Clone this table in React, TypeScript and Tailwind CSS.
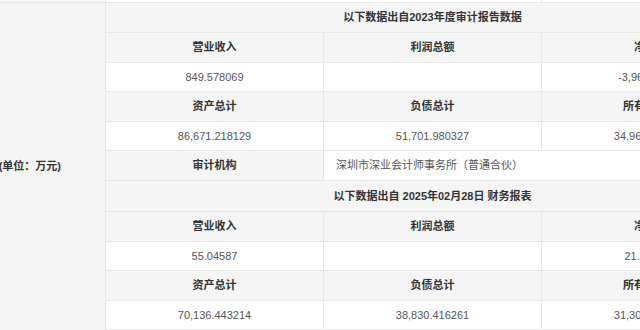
import React from "react";

interface FinRow {
  labels: string[];
  values: string[];
}

interface ReportBlock {
  title: string;
  titleH: string;
  rows: FinRow[];
}

const blocks: ReportBlock[] = [
  {
    title: "以下数据出自2023年度审计报告数据",
    titleH: "h-[30px]",
    rows: [
      { labels: ["营业收入", "利润总额", "净利润"], values: ["849.578069", "", "-3,965.27318"] },
      { labels: ["资产总计", "负债总计", "所有者权益"], values: ["86,671.218129", "51,701.980327", "34,969.237802"] },
    ],
  },
  {
    title: "以下数据出自 2025年02月28日 财务报表",
    titleH: "h-[31px]",
    rows: [
      { labels: ["营业收入", "利润总额", "净利润"], values: ["55.04587", "", "21.586214"] },
      { labels: ["资产总计", "负债总计", "所有者权益"], values: ["70,136.443214", "38,830.416261", "31,306.026953"] },
    ],
  },
];

const gridCols = "grid grid-cols-[218px_218px_217px]";

const LabelRow: React.FC<{ items: string[] }> = ({ items }) => (
  <div className={`${gridCols} h-[30px] border-b border-[#e8e8e8] bg-[#f5f5f5]`}>
    {items.map((t, i) => (
      <div
        key={i}
        className={`flex items-center justify-center font-bold text-[#333] ${
          i < 2 ? "border-r border-[#e8e8e8]" : ""
        }`}
      >
        {t}
      </div>
    ))}
  </div>
);

const ValueRow: React.FC<{ items: string[] }> = ({ items }) => (
  <div className={`${gridCols} h-[29px] border-b border-[#e8e8e8] bg-white`}>
    {items.map((t, i) => (
      <div
        key={i}
        className={`flex items-center justify-center text-[#555] ${
          i < 2 ? "border-r border-[#e8e8e8]" : ""
        }`}
      >
        {t}
      </div>
    ))}
  </div>
);

const App: React.FC = () => {
  return (
    <div className="w-[640px] h-[330px] overflow-hidden bg-white text-[11px] leading-none font-['Liberation_Sans','Noto_Sans_CJK_SC',sans-serif]">
      <div className="w-[759px]">
        {/* tail of the row above */}
        <div className="flex h-[3px] border-b border-[#e8e8e8]">
          <div className="w-[106px] bg-[#f5f5f5] border-r border-[#e8e8e8]" />
          <div className="w-[436px] border-r border-[#e8e8e8]" />
          <div className="flex-1" />
        </div>

        <div className="flex">
          <div className="w-[106px] h-[327px] shrink-0 flex items-center justify-end pr-[44px] bg-[#f5f5f5] border-r border-[#e8e8e8] overflow-hidden">
            <span className="whitespace-nowrap font-bold text-[#333]">(单位：万元)</span>
          </div>

          <div className="w-[653px] flex flex-col">
            {blocks.map((b, bi) => (
              <React.Fragment key={bi}>
                <div
                  className={`${b.titleH} flex items-center justify-center border-b border-[#e8e8e8] bg-[#f5f5f5] font-bold text-[#333] whitespace-pre`}
                >
                  {b.title}
                </div>
                {b.rows.map((r, ri) => (
                  <React.Fragment key={ri}>
                    <LabelRow items={r.labels} />
                    <ValueRow items={r.values} />
                  </React.Fragment>
                ))}
                {bi === 0 && (
                  <div className="flex h-[30px] border-b border-[#e8e8e8]">
                    <div className="w-[218px] flex items-center justify-center bg-[#f5f5f5] border-r border-[#e8e8e8] font-bold text-[#333]">
                      审计机构
                    </div>
                    <div className="flex-1 flex items-center pl-3 bg-white text-[#555]">
                      深圳市深业会计师事务所（普通合伙）
                    </div>
                  </div>
                )}
              </React.Fragment>
            ))}
          </div>
        </div>
      </div>
    </div>
  );
};

export default App;
